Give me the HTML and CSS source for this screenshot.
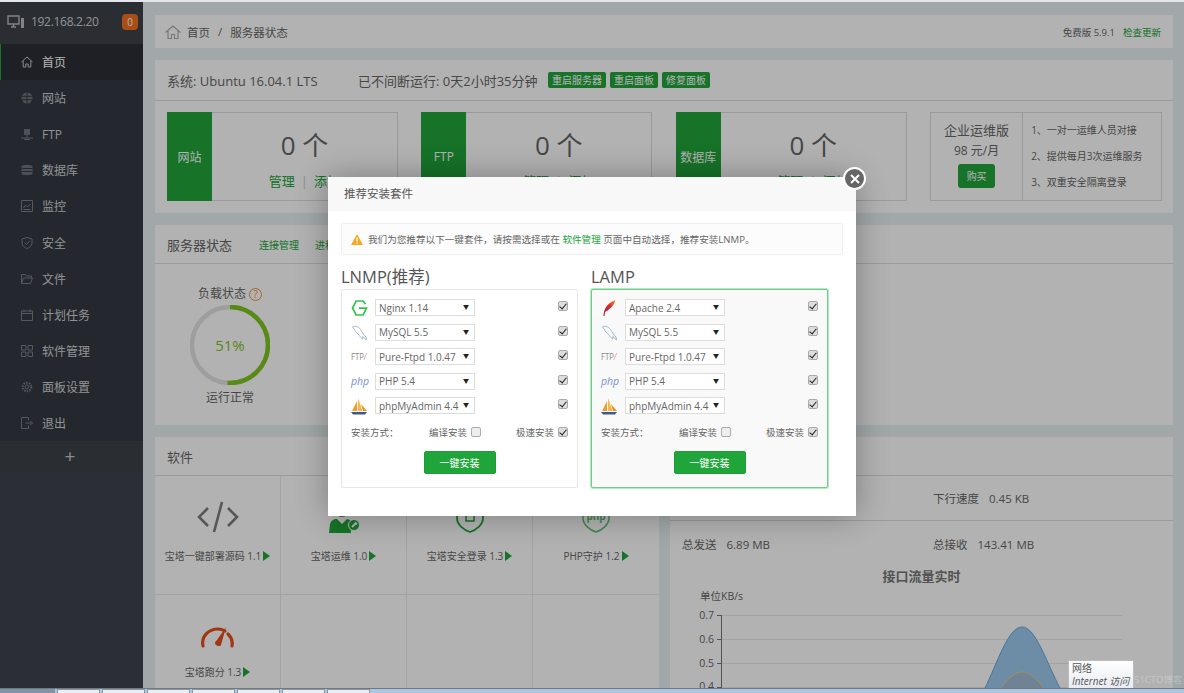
FILE: index.html
```html
<!DOCTYPE html>
<html lang="zh-CN">
<head>
  <meta charset="UTF-8" />
  <title>宝塔面板</title>
  <link rel="stylesheet" href="styles.css">
</head>
<body>

  <svg class="sprites" width="0" height="0">
    <symbol id="logoNginx" viewBox="0 0 16 16">
      <path d="M14 4.2 11.6 1H4.6L1 8l3.6 7h7L15 8.2H7.5" fill="none" stroke="#35c24a" stroke-width="1.7"/>
    </symbol>
    <symbol id="logoMysql" viewBox="0 0 16 16">
      <path d="M1 2C4 .5 7 1.500 9 4.500c1.500 2.500 3 5 5.500 7.500l.5 3c-1.500-1-2.500-2-3.500-3.500L11 14C9 12.500 8 10.500 6.500 9 5 7.500 3.500 6.500 3 4.500 2.500 3.500 1.500 3 1 2Z" fill="none" stroke="#7d9db5" stroke-width=".7"/>
    </symbol>
    <symbol id="logoPma" viewBox="0 0 17 17">
      <path d="M1 13 6 3v10Z" fill="#f0a02a"/>
      <path d="M7 13V0l4.500 13Z" fill="#f7b64a"/>
      <path d="M12 13 10 6l6 7Z" fill="#e8922a"/>
      <path d="M0 14h16l-2 2.500H2Z" fill="#3a5a8c"/>
    </symbol>
    <symbol id="logoApache" viewBox="0 0 16 16">
      <defs>
        <linearGradient id="feather" x1="0" y1="1" x2="1" y2="0">
          <stop offset="0" stop-color="#8a1a3a"/>
          <stop offset=".6" stop-color="#e02a2a"/>
          <stop offset="1" stop-color="#f6a23a"/>
        </linearGradient>
      </defs>
      <path d="M2 16C2 9 6 3 14 0c-1 4-3 6-5 8-2 2-4 3-5.500 4L3 16Z" fill="url(#feather)"/>
    </symbol>
  </svg>

  <div class="topStrip"></div>

  <div class="app">
    <aside class="sidebar">
      <div class="hostBar">
        <svg class="hostIcon" viewBox="0 0 18 14" width="18" height="14">
          <path d="M1 1h11v8H1ZM4 12h5M6.500 9v3" fill="none" stroke="currentColor" stroke-width="1.400"/>
          <path d="M14 3h3v10h-3Z" fill="currentColor"/>
        </svg>
        <span class="hostIp">192.168.2.20</span>
        <span class="hostBadge">0</span>
      </div>
      <ul class="menu">
        <li class="menuItem active">
          <svg viewBox="0 0 12 12"><path d="M.5 6 6 1l5.500 5M2.200 5v6h2.600V8h2.400v3h2.600V5"/></svg>首页
        </li>
        <li class="menuItem">
          <svg viewBox="0 0 12 12"><circle class="fill" cx="6" cy="6" r="5.500"/><path class="cut" d="M.5 4.300h11M.5 7.700h11M6 .5v11"/></svg>网站
        </li>
        <li class="menuItem">
          <svg viewBox="0 0 12 12"><path class="fill" d="M3 1h6v6H3Z"/><path d="M0 10h12M6 7v3M3 11.500h6"/></svg>FTP
        </li>
        <li class="menuItem">
          <svg viewBox="0 0 12 12"><path class="fill" d="M.5 2C.5.500 11.500.500 11.500 2v8c0 1.500-11 1.500-11 0Z"/><path class="cut" d="M.5 4.500h11M.5 7.500h11"/></svg>数据库
        </li>
        <li class="menuItem">
          <svg viewBox="0 0 12 12"><path d="M.5.500h11v11H.5ZM2.500 8l2-3 2 2 3-3M2.500 9.500h7"/></svg>监控
        </li>
        <li class="menuItem">
          <svg viewBox="0 0 12 12"><path d="M6 .5 11 2v4c0 3-2.500 4.500-5 5.500C3.500 10.500 1 9 1 6V2ZM3.500 5.500 5.500 7.500 8.500 4"/></svg>安全
        </li>
        <li class="menuItem">
          <svg viewBox="0 0 12 12"><path d="M.5 10.500v-9h4l1 1.500h5v2M.5 10.500h9l2-5.500H2.500Z"/></svg>文件
        </li>
        <li class="menuItem">
          <svg viewBox="0 0 12 12"><path d="M.5 2h11v9.500H.5ZM.5 4.500h11M3 .5v2.500M9 .5v2.500"/></svg>计划任务
        </li>
        <li class="menuItem">
          <svg viewBox="0 0 12 12"><path d="M.5.500h4.500v4.500H.5ZM7 .5h4.500v4.500H7ZM.5 7h4.500v4.500H.5ZM7 7h4.500v4.500H7Z"/></svg>软件管理
        </li>
        <li class="menuItem">
          <svg viewBox="0 0 12 12"><circle cx="6" cy="6" r="2"/><circle cx="6" cy="6" r="4.300" stroke-width="2" stroke-dasharray="1.500 1.200"/></svg>面板设置
        </li>
        <li class="menuItem">
          <svg viewBox="0 0 12 12"><path d="M7.500 3.500v-3h-7v11h7v-3M4.500 6h7M9.500 4l2 2-2 2"/></svg>退出
        </li>
      </ul>
      <div class="addRow">+</div>
    </aside>

    <main class="main">
      <div class="crumbBar">
        <svg class="crumbHome" viewBox="0 0 16 14" width="16" height="14">
          <path d="M.5 7.500 8 1l7.500 6.500M3 6v7.500h3.500V9.500h3v4H13V6" fill="none" stroke="currentColor" stroke-width="1.100"/>
        </svg>
        <span>首页</span>
        <span class="crumbSep">/</span>
        <span>服务器状态</span>
        <span class="crumbRight">免费版 5.9.1<a class="greenLink updateLink">检查更新</a></span>
      </div>

      <section class="panel">
        <div class="sysRow">
          <span class="sysName">系统: Ubuntu 16.04.1 LTS</span>
          <span class="sysUptime">已不间断运行: 0天2小时35分钟</span>
          <span class="tag">重启服务器</span>
          <span class="tag">重启面板</span>
          <span class="tag">修复面板</span>
        </div>
        <div class="statRow">
          <div class="statBox">
            <div class="statLabel">网站</div>
            <div class="statBody">
              <div class="statNum">0 个</div>
              <div class="statLinks"><a class="greenLink">管理</a><i>|</i><a class="greenLink">添加</a></div>
            </div>
          </div>
          <div class="statBox">
            <div class="statLabel">FTP</div>
            <div class="statBody">
              <div class="statNum">0 个</div>
              <div class="statLinks"><a class="greenLink">管理</a><i>|</i><a class="greenLink">添加</a></div>
            </div>
          </div>
          <div class="statBox">
            <div class="statLabel">数据库</div>
            <div class="statBody">
              <div class="statNum">0 个</div>
              <div class="statLinks"><a class="greenLink">管理</a><i>|</i><a class="greenLink">添加</a></div>
            </div>
          </div>
          <div class="promoBox">
            <div class="promoLeft">
              <div class="promoTitle">企业运维版</div>
              <div class="promoPrice">98 元/月</div>
              <span class="buyBtn">购买</span>
            </div>
            <ul class="promoList">
              <li>1、一对一运维人员对接</li>
              <li>2、提供每月3次运维服务</li>
              <li>3、双重安全隔离登录</li>
            </ul>
          </div>
        </div>
      </section>

      <section class="panel statusPanel">
        <div class="panelHead">
          <span class="panelTitle">服务器状态</span>
          <a class="greenLink headLink">连接管理</a>
          <a class="greenLink headLink">进程管理</a>
        </div>
        <div class="loadBlock">
          <div class="loadTitle">负载状态 <span class="helpMark">?</span></div>
          <div class="loadRing">
            <svg viewBox="0 0 80 80" width="80" height="80">
              <circle cx="40" cy="40" r="38" fill="none" stroke="#e3e3e3" stroke-width="4.500"/>
              <circle cx="40" cy="40" r="38" fill="none" stroke="#80c61f" stroke-width="4.500"
                stroke-dasharray="121.800 238.800" transform="rotate(-90 40 40)"/>
            </svg>
            <span class="loadValue">51%</span>
          </div>
          <div class="loadText">运行正常</div>
        </div>
      </section>

      <div class="bottomRow">
        <section class="panel softPanel">
          <div class="panelHead"><span class="panelTitle">软件</span></div>
          <div class="softGrid">
            <div class="softCell">
              <svg class="softIcon" viewBox="0 0 42 32" width="42" height="32">
                <path d="M11 7 2 16l9 9M31 7l9 9-9 9M25 1 17 31" fill="none" stroke="#7d7d7d" stroke-width="2.600"/>
              </svg>
              <div class="softName">宝塔一键部署源码 1.1</div>
            </div>
            <div class="softCell">
              <svg class="softIcon" viewBox="0 0 42 32" width="42" height="32">
                <circle cx="19" cy="9" r="6" fill="none" stroke="#20a53a" stroke-width="2"/>
                <path d="M6 32l1-9c1-3 3-5 7-5l5 5 5-5 3 1 1 13Z" fill="#20a53a"/>
                <circle cx="31" cy="24" r="5.500" fill="#20a53a" stroke="#fff"/>
                <path d="M29 26l3.500-3.500M32 21.500l2 2" stroke="#fff" stroke-width="2"/>
              </svg>
              <div class="softName">宝塔运维 1.0</div>
            </div>
            <div class="softCell">
              <svg class="softIcon" viewBox="0 0 42 32" width="42" height="32">
                <path d="M21 1 34 4v13c0 7-7 12-13 14C15 29 8 24 8 17V4Z" fill="none" stroke="#20a53a" stroke-width="1.800"/>
                <path d="M17 13h8v7h-8Z" fill="none" stroke="#20a53a" stroke-width="1.500"/>
              </svg>
              <div class="softName">宝塔安全登录 1.3</div>
            </div>
            <div class="softCell">
              <svg class="softIcon" viewBox="0 0 42 32" width="42" height="32">
                <path d="M21 1 34 4v13c0 7-7 12-13 14C15 29 8 24 8 17V4Z" fill="none" stroke="#5fc06f" stroke-width="1.500"/>
                <text class="shieldText" x="21" y="19" text-anchor="middle">php</text>
              </svg>
              <div class="softName">PHP守护 1.2</div>
            </div>
            <div class="softCell">
              <svg class="softIcon gauge" viewBox="0 0 42 32" width="42" height="32">
                <path d="M6 26C4 17 11 9 21 9c3 0 5 .8 7 2M31 14c3 3 5 7 4 12" fill="none" stroke="#e5501c" stroke-width="3.200" stroke-linecap="round"/>
                <path d="M29 7 24 25c-1 2-6 1-6-2 0-1 1-2 2-3Z" fill="#e5501c"/>
              </svg>
              <div class="softName">宝塔跑分 1.3</div>
            </div>
            <div class="softCell"></div>
            <div class="softCell"></div>
            <div class="softCell"></div>
          </div>
        </section>

        <section class="panel netPanel">
          <div class="panelHead"></div>
          <div class="netRow firstNet">
            <span class="netCell"></span>
            <span class="netCell">下行速度<b>0.45 KB</b></span>
          </div>
          <div class="netRow">
            <span class="netCell">总发送<b>6.89 MB</b></span>
            <span class="netCell">总接收<b>143.41 MB</b></span>
          </div>
          <div class="chartTitle">接口流量实时</div>
          <svg class="chart" viewBox="0 0 503 100" width="503" height="100">
            <text class="chartText" x="30" y="10">单位KB/s</text>
            <g stroke="#eaeaea">
              <path d="M51 25.500h401M51 49.500h401M51 73.500h401M51 97.500h401"/>
            </g>
            <path d="M314 100C328 72 338 37 352 37S376 72 391 100Z" fill="#9dcbf0" stroke="#6aa8dd" stroke-width="1"/>
            <path d="M329 100C337 90 344 82 352 82S368 90 375 100Z" fill="#a0bcd6" stroke="#f0c883" stroke-width="1"/>
            <path d="M51.500 25v75M47 25.500h5M47 49.500h5M47 73.500h5M47 97.500h5" stroke="#777" fill="none"/>
            <text class="chartText" x="44" y="29" text-anchor="end">0.7</text>
            <text class="chartText" x="44" y="53" text-anchor="end">0.6</text>
            <text class="chartText" x="44" y="77" text-anchor="end">0.5</text>
            <text class="chartText" x="44" y="100" text-anchor="end">0.4</text>
          </svg>
        </section>
      </div>
    </main>

    <div class="overlay">
      <div class="modal">
        <span class="modalClose">
          <svg viewBox="0 0 10 10" width="10" height="10"><path d="M1 1l8 8M9 1 1 9" stroke="#fff" stroke-width="2"/></svg>
        </span>
        <div class="modalTitle">推荐安装套件</div>
        <div class="modalBody">
          <div class="notice">
            <svg viewBox="0 0 12 11" width="12" height="11">
              <path d="M6 0 12 11H0Z" fill="#f6a821"/>
              <path d="M6 3.500v4M6 8.500v1.200" stroke="#fff" stroke-width="1.200"/>
            </svg>
            <span>我们为您推荐以下一键套件，请按需选择或在 <a class="greenLink noticeLink">软件管理</a> 页面中自动选择，推荐安装LNMP。</span>
          </div>
          <div class="suiteRow">
            <div class="suite">
              <h3 class="suiteName">LNMP(推荐)</h3>
              <div class="suiteBox">
                <div class="pkgRow">
                  <svg class="pkgLogo" width="16" height="16"><use href="#logoNginx"/></svg>
                  <div class="pkgSelect"><select><option>Nginx 1.14</option></select></div>
                  <input class="tick" type="checkbox" checked>
                </div>
                <div class="pkgRow">
                  <svg class="pkgLogo" width="16" height="16"><use href="#logoMysql"/></svg>
                  <div class="pkgSelect"><select><option>MySQL 5.5</option></select></div>
                  <input class="tick" type="checkbox" checked>
                </div>
                <div class="pkgRow">
                  <span class="pkgLogo ftpLogo">FTP<i>/</i></span>
                  <div class="pkgSelect"><select><option>Pure-Ftpd 1.0.47</option></select></div>
                  <input class="tick" type="checkbox" checked>
                </div>
                <div class="pkgRow">
                  <span class="pkgLogo phpLogo">php</span>
                  <div class="pkgSelect"><select><option>PHP 5.4</option></select></div>
                  <input class="tick" type="checkbox" checked>
                </div>
                <div class="pkgRow">
                  <svg class="pkgLogo" width="17" height="17"><use href="#logoPma"/></svg>
                  <div class="pkgSelect"><select><option>phpMyAdmin 4.4</option></select></div>
                  <input class="tick" type="checkbox" checked>
                </div>
                <div class="modeRow">
                  <span class="modeLabel">安装方式：</span>
                  <label class="modeOpt firstOpt">编译安装<input class="tick" type="checkbox"></label>
                  <label class="modeOpt">极速安装<input class="tick" type="checkbox" checked></label>
                </div>
                <button class="installBtn" type="button">一键安装</button>
              </div>
            </div>
            <div class="suite">
              <h3 class="suiteName">LAMP</h3>
              <div class="suiteBox lampBox">
                <div class="pkgRow">
                  <svg class="pkgLogo" width="16" height="16"><use href="#logoApache"/></svg>
                  <div class="pkgSelect"><select><option>Apache 2.4</option></select></div>
                  <input class="tick" type="checkbox" checked>
                </div>
                <div class="pkgRow">
                  <svg class="pkgLogo" width="16" height="16"><use href="#logoMysql"/></svg>
                  <div class="pkgSelect"><select><option>MySQL 5.5</option></select></div>
                  <input class="tick" type="checkbox" checked>
                </div>
                <div class="pkgRow">
                  <span class="pkgLogo ftpLogo">FTP<i>/</i></span>
                  <div class="pkgSelect"><select><option>Pure-Ftpd 1.0.47</option></select></div>
                  <input class="tick" type="checkbox" checked>
                </div>
                <div class="pkgRow">
                  <span class="pkgLogo phpLogo">php</span>
                  <div class="pkgSelect"><select><option>PHP 5.4</option></select></div>
                  <input class="tick" type="checkbox" checked>
                </div>
                <div class="pkgRow">
                  <svg class="pkgLogo" width="17" height="17"><use href="#logoPma"/></svg>
                  <div class="pkgSelect"><select><option>phpMyAdmin 4.4</option></select></div>
                  <input class="tick" type="checkbox" checked>
                </div>
                <div class="modeRow">
                  <span class="modeLabel">安装方式：</span>
                  <label class="modeOpt firstOpt">编译安装<input class="tick" type="checkbox"></label>
                  <label class="modeOpt">极速安装<input class="tick" type="checkbox" checked></label>
                </div>
                <button class="installBtn" type="button">一键安装</button>
              </div>
            </div>
          </div>
        </div>
      </div>
    </div>

    <div class="winTip">
      <div>网络</div>
      <div class="winTipSub">Internet 访问</div>
    </div>
    <div class="watermark">51CTO博客</div>
  </div>

  <div class="taskbar">
    <span class="taskStart"></span>
    <span class="taskBtn"></span>
    <span class="taskBtn"></span>
    <span class="taskBtn"></span>
    <span class="taskBtn"></span>
    <span class="taskBtn"></span>
    <span class="taskBtn"></span>
    <span class="taskBtn"></span>
  </div>

</body>
</html>
```

FILE: styles.css
```css
* {
  box-sizing: border-box;
}

body {
  margin: 0;
  height: 693px;
  overflow: hidden;
  display: flex;
  flex-direction: column;
  font-family: "Open Sans", "Noto Sans CJK SC", sans-serif;
  font-size: 12px;
  color: #666;
  background: #e9eff3;
}

.sprites {
  position: absolute;
}

.topStrip {
  height: 2px;
  background: #e4e6ea;
}

.app {
  position: relative;
  flex: 1;
  display: flex;
  min-height: 0;
  overflow: hidden;
}

/* sidebar */
.sidebar {
  width: 143px;
  flex-shrink: 0;
  background: #3e444d;
  color: #cfd2d4;
}

.hostBar {
  height: 42px;
  display: flex;
  align-items: center;
  padding: 0 5px 3px 7px;
  background: #3d4249;
}

.hostIcon {
  color: #b9bcbf;
}

.hostIp {
  margin-left: 6px;
  font-size: 12px;
  letter-spacing: -0.3px;
}

.hostBadge {
  margin-left: auto;
  width: 16px;
  height: 16px;
  border-radius: 4px;
  background: #f2701f;
  color: #fff;
  font-size: 10px;
  line-height: 16px;
  text-align: center;
}

.menu {
  list-style: none;
  margin: 0;
  padding: 0;
  background: #343a42;
}

.menuItem {
  height: 36.100px;
  display: flex;
  align-items: center;
  gap: 9px;
  padding-left: 20px;
  border-left: 1px solid transparent;
}

.menuItem svg {
  width: 12px;
  height: 12px;
  fill: none;
  stroke: #7a7f85;
  stroke-width: 1;
}

.menuItem svg .fill {
  fill: #6f7479;
  stroke: none;
}

.menuItem svg .cut {
  stroke: #343a42;
}

.menuItem.active {
  background: #2b2f36;
  border-left-color: #20a53a;
  color: #fff;
}

.menuItem.active svg {
  stroke: #c4c7ca;
}

.addRow {
  height: 32px;
  padding-right: 3px;
  text-align: center;
  font-size: 19px;
  line-height: 30px;
  color: #c4c7ca;
  background: #3d4249;
}

/* main column */
.main {
  flex: 1;
  min-width: 0;
  padding: 13px 11px 0 12px;
  display: flex;
  flex-direction: column;
  gap: 12px;
}

.crumbBar {
  height: 33px;
  flex-shrink: 0;
  display: flex;
  align-items: center;
  padding: 0 12px 0 10px;
  background: #fff;
  font-size: 11.500px;
}

.crumbHome {
  color: #aaa;
  margin-right: 6px;
}

.crumbSep {
  margin: 0 8px;
}

.crumbRight {
  margin-left: auto;
  font-size: 9.500px;
}

.greenLink {
  color: #20a53a;
}

.updateLink {
  margin-left: 8px;
}

.panel {
  background: #fff;
  flex-shrink: 0;
}

.sysRow {
  height: 41px;
  display: flex;
  align-items: center;
  padding: 0 12px;
  border-bottom: 1px solid #ddd;
  font-size: 13px;
}

.sysName {
  width: 191px;
}

.sysUptime {
  width: 190px;
}

.tag {
  margin-right: 4px;
  padding: 0 4px;
  height: 16px;
  line-height: 16px;
  border-radius: 2px;
  background: #20a53a;
  color: #fff;
  font-size: 10px;
}

.statRow {
  display: flex;
  gap: 23.500px;
  padding: 11px 11px 12px 12px;
}

.statBox {
  width: 231px;
  height: 89px;
  display: flex;
  border: 1px solid #ddd;
}

.statLabel {
  width: 45px;
  margin: -1px 0 -1px -1px;
  background: #20a53a;
  color: #fff;
  display: flex;
  align-items: center;
  justify-content: center;
}

.statBody {
  flex: 1;
  text-align: center;
}

.statNum {
  margin-top: 13px;
  font-size: 26px;
  line-height: 38px;
  color: #666;
}

.statLinks {
  margin-top: 8px;
  font-size: 13px;
  line-height: 18px;
}

.statLinks i {
  margin: 0 6px;
  font-style: normal;
  color: #ccc;
}

.promoBox {
  width: 232px;
  height: 89px;
  display: flex;
  border: 1px solid #ddd;
}

.promoLeft {
  width: 92px;
  border-right: 1px solid #ddd;
  text-align: center;
  padding-top: 8px;
}

.promoTitle {
  font-size: 13px;
  line-height: 19px;
}

.promoPrice {
  font-size: 12px;
  line-height: 22px;
}

.buyBtn {
  display: inline-block;
  margin-top: 2px;
  width: 37px;
  height: 24px;
  border-radius: 3px;
  background: #20a53a;
  color: #fff;
  font-size: 10px;
  line-height: 24px;
}

.promoList {
  list-style: none;
  margin: 0;
  padding: 4px 0 0 8px;
  font-size: 10px;
  line-height: 26px;
}

.panelHead {
  height: 39px;
  display: flex;
  align-items: center;
  padding: 0 12px;
  border-bottom: 1px solid #ddd;
}

.panelTitle {
  font-size: 13px;
  width: 92px;
}

.headLink {
  font-size: 10px;
  margin-right: 16px;
}

.statusPanel {
  height: 200px;
}

.loadBlock {
  width: 150px;
  text-align: center;
}

.loadTitle {
  padding-top: 21px;
  line-height: 18px;
}

.helpMark {
  display: inline-block;
  width: 13px;
  height: 13px;
  border: 1px solid #f0913a;
  border-radius: 50%;
  color: #f0913a;
  font-size: 10px;
  line-height: 11px;
}

.loadRing {
  position: relative;
  width: 80px;
  height: 80px;
  margin: 2px auto 0;
}

.loadValue {
  position: absolute;
  inset: 0;
  display: flex;
  align-items: center;
  justify-content: center;
  font-size: 15px;
  color: #7fc21f;
}

.loadText {
  margin-top: 4px;
  line-height: 18px;
}

.bottomRow {
  display: flex;
  gap: 11px;
  height: 251px;
  flex-shrink: 0;
}

.softPanel {
  width: 504px;
}

.softGrid {
  display: grid;
  grid-template-columns: repeat(4, 126px);
  grid-auto-rows: 119px;
}

.softCell {
  text-align: center;
  padding-top: 25px;
  border-right: 1px solid #eaeaf0;
  border-bottom: 1px solid #eaeaf0;
}

.softCell:nth-child(4n) {
  border-right: none;
}

.softIcon {
  display: block;
  margin: 0 auto;
}

.softIcon.gauge {
  margin-bottom: -3px;
}

.shieldText {
  font-family: "Open Sans", sans-serif;
  font-size: 10px;
  font-weight: 700;
  fill: #5fc06f;
}

.softName {
  margin-top: 16px;
  font-size: 10px;
  line-height: 14px;
}

.softName::after {
  content: "";
  display: inline-block;
  margin-left: 2px;
  border-left: 7px solid #20a53a;
  border-top: 5px solid transparent;
  border-bottom: 5px solid transparent;
  vertical-align: -1px;
}

.netPanel {
  width: 503px;
}

.netRow {
  height: 45px;
  display: flex;
  align-items: center;
  padding-left: 12px;
  font-size: 11.500px;
}

.firstNet {
  border-bottom: 1px solid #ddd;
}

.netCell {
  width: 251px;
  flex-shrink: 0;
  white-space: nowrap;
}

.netCell b {
  margin-left: 10px;
  font-weight: 400;
}

.chartTitle {
  margin-top: 1px;
  text-align: center;
  font-size: 13px;
  font-weight: 700;
  line-height: 18px;
  color: #777;
}

.chart {
  display: block;
  margin-top: 5px;
}

.chartText {
  font-family: "Open Sans", "Noto Sans CJK SC", sans-serif;
  font-size: 10.500px;
  fill: #666;
}

/* modal */
.overlay {
  position: absolute;
  inset: 0;
  background: rgba(0, 0, 0, 0.3);
}

.modal {
  position: absolute;
  left: 328px;
  top: 175px;
  width: 528px;
  height: 339px;
  background: #fff;
  box-shadow: 0 0 30px rgba(0, 0, 0, 0.3);
}

.modalClose {
  position: absolute;
  right: -10px;
  top: -10px;
  width: 23px;
  height: 23px;
  display: flex;
  align-items: center;
  justify-content: center;
  border: 2px solid #fff;
  border-radius: 50%;
  background: #666;
}

.modalTitle {
  height: 34px;
  padding-left: 16px;
  font-size: 11.500px;
  line-height: 34px;
  color: #555;
  background: #f8f8f8;
}

.modalBody {
  padding: 12px 13px;
}

.notice {
  height: 32px;
  display: flex;
  align-items: center;
  gap: 5px;
  padding-left: 9px;
  border: 1px solid #f0f0f0;
  border-radius: 2px;
  background: #fcfcfc;
  font-size: 9.600px;
  color: #666;
}

.suiteRow {
  display: flex;
  gap: 13px;
}

.suite {
  width: 237px;
}

.suiteName {
  margin: 10px 0 0;
  font-size: 16.500px;
  font-weight: 400;
  line-height: 24px;
  color: #555;
}

.suiteBox {
  height: 199px;
  padding: 9px 9px 0;
  border: 1px solid #e6e6e6;
  border-radius: 2px;
  text-align: center;
}

.lampBox {
  border-color: #6fcf86;
  box-shadow: 0 0 0 1px rgba(120, 215, 145, 0.55);
  background: #f9f9f9;
}

.pkgRow {
  height: 24.500px;
  display: flex;
  align-items: flex-start;
}

.pkgLogo {
  width: 17px;
  flex-shrink: 0;
  margin-top: 1px;
}

.ftpLogo {
  font-size: 9px;
  line-height: 15px;
  color: #888;
  transform: scaleX(0.85);
  transform-origin: left;
  white-space: nowrap;
}

.ftpLogo i {
  color: #e88;
}

.phpLogo {
  font-size: 10.500px;
  font-style: italic;
  line-height: 15px;
  color: #7a8fd0;
  text-align: left;
}

.pkgSelect {
  position: relative;
  width: 100px;
  margin-left: 7px;
}

.pkgSelect::after {
  content: "▼";
  position: absolute;
  right: 6px;
  top: 2px;
  font-size: 6px;
  line-height: 12px;
  color: #222;
  pointer-events: none;
}

.pkgSelect select {
  display: block;
  width: 100%;
  height: 17px;
  padding: 0 0 0 3px;
  appearance: none;
  border: 1px solid #ddd;
  border-radius: 0;
  background: #fff;
  font-family: "Open Sans", "Noto Sans CJK SC", sans-serif;
  font-size: 10px;
  color: #666;
}

.tick {
  appearance: none;
  position: relative;
  width: 10px;
  height: 10px;
  margin: 2px 0 0 auto;
  flex-shrink: 0;
  border: 1px solid #ababab;
  border-radius: 2px;
  background: #eee;
}

.tick:checked {
  background: #ddd;
}

.tick:checked::after {
  content: "";
  position: absolute;
  left: 2px;
  top: 0;
  width: 3px;
  height: 6px;
  border: solid #222;
  border-width: 0 1.500px 1.500px 0;
  transform: rotate(40deg);
}

.modeRow {
  display: flex;
  align-items: center;
  height: 20px;
  font-size: 9.500px;
  color: #666;
}

.modeLabel {
  width: 81px;
  text-align: left;
}

.modeOpt {
  display: flex;
  align-items: center;
  gap: 4px;
  white-space: nowrap;
}

.modeOpt .tick {
  margin: 0;
}

.firstOpt {
  margin-right: 35px;
}

.installBtn {
  display: block;
  width: 72px;
  height: 23px;
  margin: 9px auto 0;
  padding: 0;
  border: 1px solid #1f9e38;
  border-radius: 2px;
  background: #20a53a;
  color: #fff;
  font-family: inherit;
  font-size: 10px;
}

/* things from the desktop on top of the browser */
.winTip {
  position: absolute;
  left: 1068px;
  top: 658px;
  width: 66px;
  height: 28px;
  padding: 1px 3px;
  border: 1px solid #bbb;
  border-bottom: none;
  background: linear-gradient(#fff, #e8ebf2);
  font-size: 10px;
  line-height: 13px;
  color: #555;
  white-space: nowrap;
  overflow: hidden;
}

.winTipSub {
  font-style: italic;
}

.watermark {
  position: absolute;
  left: 1134px;
  bottom: 1px;
  font-size: 9.500px;
  line-height: 14px;
  white-space: nowrap;
  color: rgba(235, 235, 235, 0.35);
}

.taskbar {
  height: 5px;
  display: flex;
  gap: 2px;
  border-top: 1px solid #777;
  background: #a9c6e4;
}

.taskStart {
  width: 55px;
  background: #7f94a8;
}

.taskBtn {
  width: 43px;
  background: #e8eef5;
  border: 1px solid #8a97a5;
  border-bottom: none;
}
```
